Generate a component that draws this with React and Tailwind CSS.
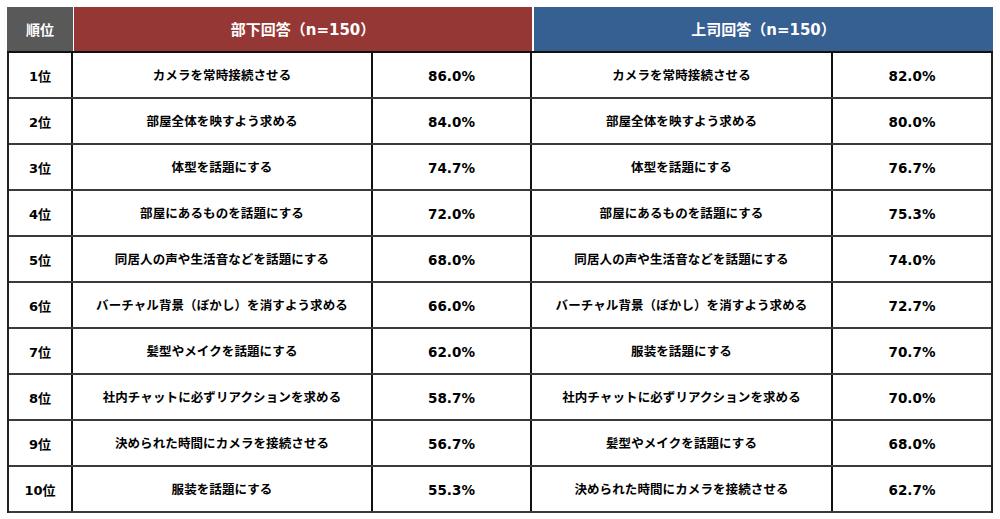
import React from "react";

const left = [
  ["カメラを常時接続させる", "86.0%"],
  ["部屋全体を映すよう求める", "84.0%"],
  ["体型を話題にする", "74.7%"],
  ["部屋にあるものを話題にする", "72.0%"],
  ["同居人の声や生活音などを話題にする", "68.0%"],
  ["バーチャル背景（ぼかし）を消すよう求める", "66.0%"],
  ["髪型やメイクを話題にする", "62.0%"],
  ["社内チャットに必ずリアクションを求める", "58.7%"],
  ["決められた時間にカメラを接続させる", "56.7%"],
  ["服装を話題にする", "55.3%"],
];
const right = [
  ["カメラを常時接続させる", "82.0%"],
  ["部屋全体を映すよう求める", "80.0%"],
  ["体型を話題にする", "76.7%"],
  ["部屋にあるものを話題にする", "75.3%"],
  ["同居人の声や生活音などを話題にする", "74.0%"],
  ["バーチャル背景（ぼかし）を消すよう求める", "72.7%"],
  ["服装を話題にする", "70.7%"],
  ["社内チャットに必ずリアクションを求める", "70.0%"],
  ["髪型やメイクを話題にする", "68.0%"],
  ["決められた時間にカメラを接続させる", "62.7%"],
];

const jp = { fontFamily: '"DejaVu Sans", "Noto Sans CJK JP", sans-serif' };

export default function App() {
  return (
    <div className="w-[1000px] h-[519px] bg-white pt-[7px] pl-[7px]" style={jp}>
      <div className="w-[986px]">
        <div className="flex h-[46px] border-b-2 border-[#111] text-white font-bold">
          <div className="w-[66px] bg-[#595959] flex items-center justify-center pt-[3px] text-[14px]">順位</div>
          <div className="w-[1px] bg-white" />
          <div className="w-[458px] bg-[#953735] flex items-center justify-center pt-[3px] text-[15px]">部下回答（n=150）</div>
          <div className="w-[2px] bg-white" />
          <div className="w-[459px] bg-[#376092] flex items-center justify-center pt-[3px] text-[15px]">上司回答（n=150）</div>
        </div>
        <div className="border-l-2 border-r-2 border-[#222]">
          {left.map((l, i) => (
            <div key={i} className="flex h-[46px] border-b-2 border-[#3a3a3a] text-black font-bold">
              <div className="w-[64px] flex items-center justify-center pt-[3px] text-[13px] border-r-2 border-[#111]">{i + 1}位</div>
              <div className="w-[300px] flex items-center justify-center pt-[3px] text-[12.5px] tracking-[0.1px] border-r-2 border-[#111]">{l[0]}</div>
              <div className="w-[159px] flex items-center justify-center pt-[3px] text-[13.5px] border-r-2 border-[#111]">{l[1]}</div>
              <div className="w-[301px] flex items-center justify-center pt-[3px] text-[12.5px] tracking-[0.1px] border-r-2 border-[#111]">{right[i][0]}</div>
              <div className="flex-1 flex items-center justify-center pt-[3px] text-[13.5px]">{right[i][1]}</div>
            </div>
          ))}
        </div>
      </div>
    </div>
  );
}
